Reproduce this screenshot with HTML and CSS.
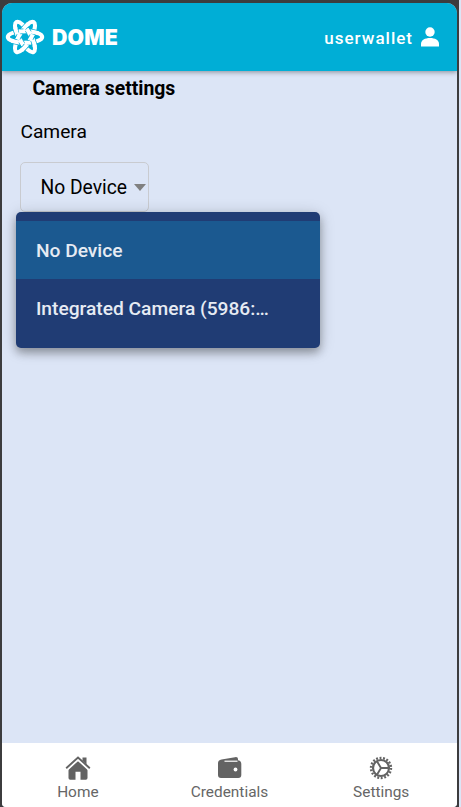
FILE: index.html
```
<!DOCTYPE html>
<html lang="en">
<head>
<meta charset="utf-8">
<title>Camera settings</title>
<link rel="stylesheet" href="styles.css">
</head>
<body>
<div class="frame">
<div class="app">
  <header class="topbar">
    <div class="brand">
      <svg class="logo" viewBox="-20 -18 40 36">
        <defs>
          <g id="cross">
            <path class="gap" d="M-11.800 4.200A17.200 5.800 0 0 0-6.500 5.370M1.500 5.780A17.200 5.800 0 0 0 5 5.550"/>
            <path class="over" d="M-13.300 3.680A17.200 5.800 0 0 0-5.500 5.500M.5 5.800A17.200 5.800 0 0 0 6 5.430"/>
          </g>
        </defs>
        <g class="ribbon">
          <ellipse rx="17.200" ry="5.800"/>
          <ellipse rx="17.200" ry="5.800" transform="rotate(60)"/>
          <ellipse rx="17.200" ry="5.800" transform="rotate(120)"/>
        </g>
        <use href="#cross"/>
        <use href="#cross" transform="rotate(60)"/>
        <use href="#cross" transform="rotate(120)"/>
        <use href="#cross" transform="rotate(180)"/>
        <use href="#cross" transform="rotate(240)"/>
        <use href="#cross" transform="rotate(300)"/>
      </svg>
      <span class="name">DOME</span>
    </div>
    <div class="user">
      <span>userwallet</span>
      <svg class="person" viewBox="0 0 18 20"><circle cx="9" cy="5" r="4.700"/><path d="M0 19.500V17c0-4 4-6 9-6s9 2 9 6v2.500Z"/></svg>
    </div>
  </header>
  <main class="content">
    <h1>Camera settings</h1>
    <p class="label">Camera</p>
    <div class="select">
      <span>No Device</span><i class="caret"></i>
      <ul class="menu">
        <li class="selected">No Device</li>
        <li>Integrated Camera (5986:…</li>
      </ul>
    </div>
  </main>
  <nav class="tabs">
    <a><svg viewBox="0 0 26 24"><path d="M17.500 1.500h4v7l-4-4Z"/><path d="M3.500 13 13 4.500l9.500 8.500V22q0 1.700-1.700 1.700H15.500v-8h-5v8H5.200q-1.700 0-1.700-1.700Z"/><path class="roof-gap" d="M2.500 13.500 13 4l10.500 9.500"/><path class="roof" d="M1.200 12.200 13 1.500l11.800 10.700"/></svg><span>Home</span></a>
    <a><svg viewBox="0 0 26 24"><path d="M1 7q0-3 3.500-3.600L18 1.200q3-.5 3 1.800v1.200h-.5q3.800.3 3.800 3.800v11q0 3-3 3H4q-3 0-3-3Z"/><path class="slot" d="M7.500 5.200H20.500"/><circle class="hole" cx="18.500" cy="13.500" r="1.900"/></svg><span>Credentials</span></a>
    <a><svg viewBox="-13 -12 26 24"><circle class="teeth" r="10"/><circle class="ring" r="8"/><path class="spokes" d="M8 0H0L-4.200-7M0 0-4.200 7"/></svg><span>Settings</span></a>
  </nav>
</div>
</div>
</body>
</html>
```
FILE: styles.css
```
* { box-sizing: border-box; }
body {
  margin: 0;
  background: #dce5f6;
  font-family: Roboto, "Liberation Sans", sans-serif;
  height: 807px;
  overflow: hidden;
}
.frame {
  width: 459px;
  height: 807px;
  padding: 3px 2px 0;
  background: #3c3c3e;
}
.app {
  height: 804px;
  display: flex;
  flex-direction: column;
  background: #dce5f6;
  border-radius: 10px 10px 4px 4px;
  overflow: hidden;
}
.topbar {
  height: 68px;
  flex: none;
  display: flex;
  align-items: center;
  justify-content: space-between;
  padding: 0 18px 0 3px;
  background: #00aed6;
  color: #fff;
  box-shadow: 0 1px 5px rgba(0, 0, 0, .4);
}
.brand, .user { display: flex; align-items: center; }
.logo { width: 40px; height: 36px; }
.ribbon ellipse, .over { fill: none; stroke: #fff; stroke-width: 4.1; }
.gap { fill: none; stroke: #00aed6; stroke-width: 5.5; }
.name {
  margin-left: 7px;
  font: 900 21.3px/26px Inter, Roboto, sans-serif;
  letter-spacing: .2px;
}
.user { font-size: 17px; font-weight: 500; letter-spacing: 1px; gap: 8px; padding-top: 2px; }
.person { width: 18px; height: 20px; fill: #fff; margin-top: -2px; }
.content { flex: 1; padding: 6px 18px 0 18.4px; }
h1 { margin: 0 0 0 12px; font-size: 19.4px; line-height: 24px; font-weight: 700; }
.label { margin: 19px 0 0; font-size: 19.2px; line-height: 24px; }
.select {
  position: relative;
  width: 129px;
  height: 50px;
  margin-top: 18px;
  padding: 0 2px 0 19px;
  border: 1px solid #c9cbd0;
  border-radius: 5px;
  display: flex;
  align-items: center;
  justify-content: space-between;
  font-size: 19.3px;
}
.caret {
  border: 6px solid transparent;
  border-top: 7px solid #808080;
  border-bottom: 0;
}
.menu {
  position: absolute;
  top: 48.5px;
  left: -5px;
  width: 304px;
  height: 136px;
  margin: 0;
  padding: 9px 0;
  list-style: none;
  border-radius: 5px;
  background: #203c74;
  color: #e6ebf3;
  font-size: 19.2px;
  font-weight: 500;
  box-shadow: 0 5px 8px rgba(0, 0, 0, .28), 0 2px 16px rgba(0, 0, 0, .18);
}
.menu li { height: 58px; line-height: 59px; padding-left: 19.5px; white-space: nowrap; }
.menu .selected { background: #1b5990; }
.tabs {
  height: 64px;
  flex: none;
  display: flex;
  background: #fff;
  color: #666;
}
.tabs a {
  flex: 1;
  display: flex;
  flex-direction: column;
  align-items: center;
  padding-top: 13px;
  font-size: 15.4px;
  line-height: 18px;
}
.tabs svg { width: 26px; height: 24px; margin-bottom: 3px; fill: #636363; }
.tabs .roof-gap { fill: none; stroke: #fff; stroke-width: 1.7; }
.tabs .roof { fill: none; stroke: #636363; stroke-width: 1.9; }
.tabs .slot { stroke: #fff; stroke-width: 1.2; }
.tabs .hole { fill: #fff; }
.tabs .teeth { fill: none; stroke: #636363; stroke-width: 2.4; stroke-dasharray: 1.9 1.59; }
.tabs .ring { fill: none; stroke: #636363; stroke-width: 2.2; }
.spokes { fill: none; stroke: #636363; stroke-width: 1.9; }
```
